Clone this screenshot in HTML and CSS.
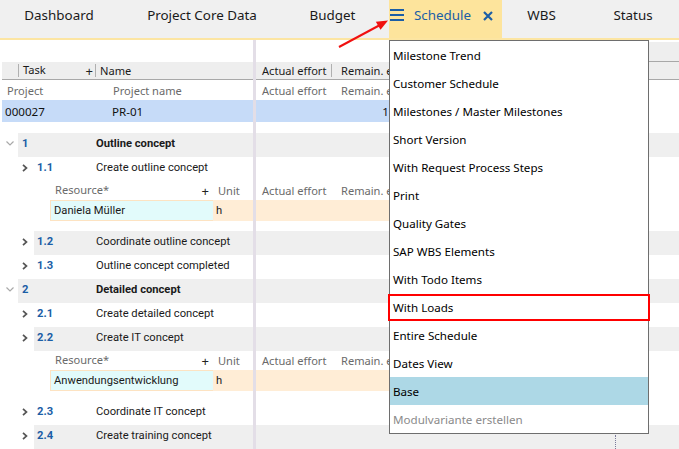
FILE: index.html
```html
<!DOCTYPE html>
<html>
<head>
<meta charset="utf-8">
<link rel="stylesheet" href="styles.css">
</head>
<body>
<div class="tabbar">
  <div class="tab t1">Dashboard</div>
  <div class="tab t2">Project Core Data</div>
  <div class="tab t3">Budget</div>
  <div class="tab active">
    <span class="burger"><i></i><i></i><i></i></span>
    <span class="tab-label">Schedule</span>
    <svg class="close" width="10" height="10" viewBox="0 0 10 10"><path d="M1 1 L9 9 M9 1 L1 9" stroke="#1b5ea6" stroke-width="2.2" fill="none"/></svg>
  </div>
  <div class="tab t5">WBS</div>
  <div class="tab t6">Status</div>
</div>

<div class="content">
  <div class="pane left">
    <div class="row r-top"></div>
    <div class="row r-head">
      <span class="h-gap"></span><span class="h-sep"></span>
      <span class="h-task"><span>Task</span><span class="plus">+</span></span>
      <span class="h-sep"></span><span class="h-name">Name</span>
    </div>
    <div class="row r-sub"><span class="s-id">Project</span><span class="s-name">Project name</span></div>
    <div class="row r-sel"><span class="sel-id">000027</span><span class="sel-name">PR-01</span></div>
    <div class="row r-gap"></div>

    <div class="row task l0">
      <span class="gutter"><svg width="8" height="5" viewBox="0 0 8 5"><path d="M0.5 0.5 L4 4 L7.5 0.5" stroke="#a9a9a9" stroke-width="1.2" fill="none"/></svg></span>
      <span class="tbody alt"><span class="num">1</span><span class="name b">Outline concept</span></span>
    </div>
    <div class="row task l1">
      <span class="gutter"><svg width="6" height="8" viewBox="0 0 6 8"><path d="M1 0.8 L4.5 4 L1 7.2" stroke="#555" stroke-width="1.7" fill="none"/></svg></span>
      <span class="tbody"><span class="num">1.1</span><span class="name">Create outline concept</span></span>
    </div>
    <div class="row res-head"><span class="rh-res"><span>Resource*</span><span class="plus">+</span></span><span class="rh-unit">Unit</span></div>
    <div class="row res-row"><span class="res-name">Daniela Müller</span><span class="res-unit">h</span></div>
    <div class="row r-gap2"></div>
    <div class="row task l1">
      <span class="gutter"><svg width="6" height="8" viewBox="0 0 6 8"><path d="M1 0.8 L4.5 4 L1 7.2" stroke="#555" stroke-width="1.7" fill="none"/></svg></span>
      <span class="tbody alt"><span class="num">1.2</span><span class="name">Coordinate outline concept</span></span>
    </div>
    <div class="row task l1">
      <span class="gutter"><svg width="6" height="8" viewBox="0 0 6 8"><path d="M1 0.8 L4.5 4 L1 7.2" stroke="#555" stroke-width="1.7" fill="none"/></svg></span>
      <span class="tbody"><span class="num">1.3</span><span class="name">Outline concept completed</span></span>
    </div>
    <div class="row task l0">
      <span class="gutter"><svg width="8" height="5" viewBox="0 0 8 5"><path d="M0.5 0.5 L4 4 L7.5 0.5" stroke="#a9a9a9" stroke-width="1.2" fill="none"/></svg></span>
      <span class="tbody alt"><span class="num">2</span><span class="name b">Detailed concept</span></span>
    </div>
    <div class="row task l1">
      <span class="gutter"><svg width="6" height="8" viewBox="0 0 6 8"><path d="M1 0.8 L4.5 4 L1 7.2" stroke="#555" stroke-width="1.7" fill="none"/></svg></span>
      <span class="tbody"><span class="num">2.1</span><span class="name">Create detailed concept</span></span>
    </div>
    <div class="row task l1">
      <span class="gutter"><svg width="6" height="8" viewBox="0 0 6 8"><path d="M1 0.8 L4.5 4 L1 7.2" stroke="#555" stroke-width="1.7" fill="none"/></svg></span>
      <span class="tbody alt"><span class="num">2.2</span><span class="name">Create IT concept</span></span>
    </div>
    <div class="row res-head"><span class="rh-res"><span>Resource*</span><span class="plus">+</span></span><span class="rh-unit">Unit</span></div>
    <div class="row res-row"><span class="res-name">Anwendungsentwicklung</span><span class="res-unit">h</span></div>
    <div class="row r-gap2"></div>
    <div class="row task l1">
      <span class="gutter"><svg width="6" height="8" viewBox="0 0 6 8"><path d="M1 0.8 L4.5 4 L1 7.2" stroke="#555" stroke-width="1.7" fill="none"/></svg></span>
      <span class="tbody"><span class="num">2.3</span><span class="name">Coordinate IT concept</span></span>
    </div>
    <div class="row task l1">
      <span class="gutter"><svg width="6" height="8" viewBox="0 0 6 8"><path d="M1 0.8 L4.5 4 L1 7.2" stroke="#555" stroke-width="1.7" fill="none"/></svg></span>
      <span class="tbody alt"><span class="num">2.4</span><span class="name">Create training concept</span></span>
    </div>
  </div>

  <div class="splitter"></div>

  <div class="pane right">
    <div class="row r-top"><span class="gantt-top"></span></div>
    <div class="row r-head">
      <span class="rc-act">Actual effort</span><span class="h-sep"></span><span class="rc-rem">Remain. e</span>
    </div>
    <div class="row r-sub"><span class="rc-act">Actual effort</span><span class="rc-rem">Remain. e</span></div>
    <div class="row r-sel"><span class="sel-block"><span class="sel-act"></span><span class="sel-rem">1</span></span></div>
    <div class="row r-gap"></div>
    <div class="row task"><span class="tfill alt"></span></div>
    <div class="row task"><span class="tfill"></span></div>
    <div class="row res-head"><span class="rc-act">Actual effort</span><span class="rc-rem">Remain. e</span></div>
    <div class="row res-row"><span class="res-fill"></span></div>
    <div class="row r-gap2"></div>
    <div class="row task"><span class="tfill alt"></span></div>
    <div class="row task"><span class="tfill"></span></div>
    <div class="row task"><span class="tfill alt"></span></div>
    <div class="row task"><span class="tfill"></span></div>
    <div class="row task"><span class="tfill alt"></span></div>
    <div class="row res-head"><span class="rc-act">Actual effort</span><span class="rc-rem">Remain. e</span></div>
    <div class="row res-row"><span class="res-fill"></span></div>
    <div class="row r-gap2"></div>
    <div class="row task"><span class="tfill"></span></div>
    <div class="row task today"><span class="tfill alt"></span><span class="today-line"></span></div>
  </div>
</div>

<div class="menu">
  <div class="mi">Milestone Trend</div>
  <div class="mi">Customer Schedule</div>
  <div class="mi">Milestones / Master Milestones</div>
  <div class="mi">Short Version</div>
  <div class="mi">With Request Process Steps</div>
  <div class="mi">Print</div>
  <div class="mi">Quality Gates</div>
  <div class="mi">SAP WBS Elements</div>
  <div class="mi">With Todo Items</div>
  <div class="mi">With Loads</div>
  <div class="mi">Entire Schedule</div>
  <div class="mi">Dates View</div>
  <div class="mi sel">Base</div>
  <div class="mi dis">Modulvariante erstellen</div>
</div>
<div class="mark-box"></div>

<svg class="arrow" width="679" height="449" viewBox="0 0 679 449">
  <line x1="339" y1="47" x2="380" y2="25" stroke="#f01010" stroke-width="2"/>
  <polygon points="388,20.5 380.5,29.8 375.8,21.8" fill="#f01010"/>
</svg>
</body>
</html>
```

FILE: styles.css
```css
* { box-sizing: border-box; margin: 0; padding: 0; }

body {
  width: 679px;
  height: 449px;
  overflow: hidden;
  background: #fff;
  font-family: "Noto Sans", "Open Sans", sans-serif;
  color: #111;
  position: relative;
}

/* ---------- tab bar ---------- */
.tabbar {
  display: flex;
  height: 40px;
  background: #f0f0f0;
  border-bottom: 2px solid #fce5a2;
}
.tab {
  height: 38px;
  display: flex;
  justify-content: center;
  font-size: 13.4px;
  line-height: 31px;
  color: #1a1a1a;
  flex-shrink: 0;
  white-space: nowrap;
}
.t1 { width: 118px; }
.t2 { width: 168px; }
.t3 { width: 93px; margin-right: 10px; }
.active {
  width: 113px;
  background: #fde49c;
  justify-content: flex-start;
  align-items: flex-start;
  padding-left: 1px;
}
.t5 { width: 79px; }
.t6 { width: 104px; }

.burger {
  display: flex;
  flex-direction: column;
  gap: 3px;
  width: 14px;
  margin-top: 9px;
}
.burger i {
  display: block;
  height: 2px;
  background: #1b5ea6;
}
.tab-label {
  color: #1b5ea6;
  margin-left: 10px;
}
.close {
  margin-left: 12px;
  margin-top: 11px;
}

/* ---------- content panes ---------- */
.content {
  display: flex;
  height: 409px;
}
.pane { display: flex; flex-direction: column; }
.left { width: 253px; }
.splitter { width: 3px; background: #e3dee7; }
.right { flex: 1; }

.row {
  display: flex;
  align-items: center;
  flex-shrink: 0;
  white-space: nowrap;
}
.r-top { height: 22px; }
.r-head {
  height: 18px;
  background: #eeeeee;
  border-bottom: 1px solid #a8a8a8;
  font-size: 11.1px;
  color: #1a1a1a;
}
.left .r-head, .left .r-sub, .left .r-sel { margin-left: 2px; }
.r-sub { height: 20px; font-size: 11.1px; color: #6a6a6a; }
.r-sel { height: 22px; background: #c6dbf8; font-size: 11.6px; color: #111; }
.r-gap { height: 11px; }
.r-gap2 { height: 10px; }

.h-gap { width: 16px; }
.h-sep { width: 1px; height: 13px; background: #b0b0b0; }
.h-task {
  width: 76px;
  display: flex;
  justify-content: space-between;
  padding-left: 4px;
  padding-right: 2px;
}
.plus { font-size: 13px; color: #222; }
.h-name { padding-left: 4px; }
.s-id { width: 111px; padding-left: 5px; }
.sel-id { width: 110px; padding-left: 3px; }

/* task rows */
.task {
  height: 24px;
  font-family: Roboto, "Noto Sans", sans-serif;
  font-size: 11.2px;
  color: #1a1a1a;
}
.gutter {
  height: 24px;
  display: flex;
  align-items: center;
  flex-shrink: 0;
  padding-bottom: 3px;
}
.l0 .gutter { width: 18px; padding-left: 6px; }
.l1 .gutter { width: 34px; padding-left: 22px; }
.tbody {
  flex: 1;
  height: 24px;
  display: flex;
  align-items: center;
  padding-bottom: 3px;
}
.alt { background: #efefef; }
.num { color: #1b5ea6; font-weight: bold; }
.l0 .num { width: 78px; padding-left: 4px; }
.l1 .num { width: 62px; padding-left: 3px; }
.name.b { font-weight: bold; }

/* resource rows */
.res-head { height: 19px; font-size: 11.1px; color: #6a6a6a; }
.rh-res {
  margin-left: 50px;
  width: 163px;
  display: flex;
  justify-content: space-between;
  padding-left: 5px;
  padding-right: 4px;
}
.rh-res .plus { color: #222; }
.rh-unit { padding-left: 5px; }
.res-row {
  height: 21px;
  font-family: Roboto, "Noto Sans", sans-serif;
  font-size: 11.2px;
  color: #1a1a1a;
}
.res-name {
  margin-left: 50px;
  width: 163px;
  height: 21px;
  line-height: 19px;
  padding-left: 3px;
  background: #e2fbfb;
  border: 1px solid #fde3c2;
  border-right: none;
}
.res-unit {
  flex: 1;
  height: 21px;
  line-height: 21px;
  padding-left: 3px;
  background: #ffedd6;
}

/* right pane */
.gantt-top {
  margin-left: 360px;
  margin-top: 2px;
  flex: 1;
  height: 20px;
  background: #eeeeee;
  border-bottom: 1px solid #a8a8a8;
}
.right .r-top { align-items: flex-start; }
.rc-act { width: 75px; padding-left: 6px; }
.rc-rem { padding-left: 9px; }
.r-sub .rc-act { width: 76px; }
.res-head .rc-act { width: 76px; }
.right .r-sel { background: transparent; }
.sel-block {
  width: 340px;
  height: 22px;
  background: #c6dbf8;
  display: flex;
  align-items: center;
}
.sel-act { width: 76px; }
.sel-rem { width: 57px; text-align: right; }
.tfill { flex: 1; height: 24px; }
.res-fill { width: 340px; height: 21px; background: #ffedd6; }
.today { position: relative; }
.today-line {
  position: absolute;
  left: 359px;
  top: 10px;
  bottom: 0;
  border-left: 1px dotted #7a7a9a;
}

/* ---------- dropdown menu ---------- */
.menu {
  position: absolute;
  left: 389px;
  top: 40px;
  width: 260px;
  height: 394px;
  background: #fff;
  border: 1px solid #6e6e6e;
  font-size: 11.6px;
  color: #000;
}
.mi {
  height: 28px;
  line-height: 29.5px;
  padding-left: 3px;
  white-space: nowrap;
  overflow: hidden;
}
.mi.sel { background: #add8e6; }
.mi.dis { color: #8a8a8a; }

.mark-box {
  position: absolute;
  left: 388px;
  top: 294px;
  width: 262px;
  height: 27px;
  border: 2px solid #ff0000;
}

.arrow {
  position: absolute;
  left: 0;
  top: 0;
  pointer-events: none;
}
```
